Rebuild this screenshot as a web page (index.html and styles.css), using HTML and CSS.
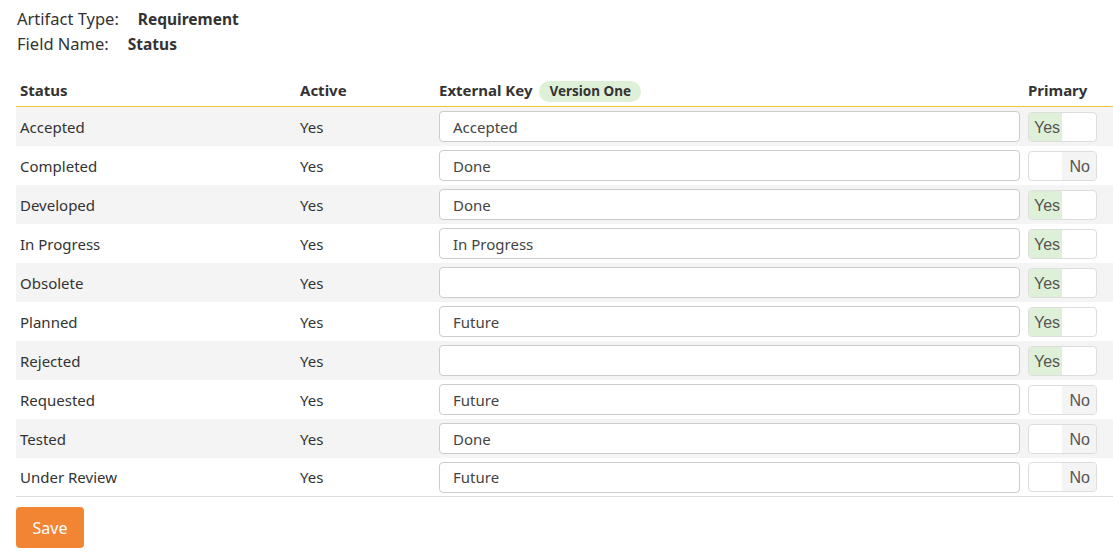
FILE: index.html
```html
<!DOCTYPE html>
<html>
<head>
<meta charset="utf-8">
<link rel="stylesheet" href="styles.css">
</head>
<body>
<div class="page">
  <div class="info">
    <div class="info-row"><span class="info-label">Artifact Type:</span><span class="info-value">Requirement</span></div>
    <div class="info-row"><span class="info-label">Field Name:</span><span class="info-value">Status</span></div>
  </div>
  <table class="grid">
    <colgroup>
      <col class="c-status"><col class="c-active"><col class="c-key"><col class="c-primary">
    </colgroup>
    <thead>
      <tr class="head-row">
        <th>Status</th>
        <th>Active</th>
        <th>External Key <span class="badge">Version One</span></th>
        <th>Primary</th>
      </tr>
    </thead>
    <tbody>
      <tr><td>Accepted</td><td>Yes</td><td><input class="key" type="text" value="Accepted"></td><td><div class="toggle on"><span class="t-yes">Yes</span><span class="t-no"></span></div></td></tr>
      <tr><td>Completed</td><td>Yes</td><td><input class="key" type="text" value="Done"></td><td><div class="toggle off"><span class="t-yes"></span><span class="t-no">No</span></div></td></tr>
      <tr><td>Developed</td><td>Yes</td><td><input class="key" type="text" value="Done"></td><td><div class="toggle on"><span class="t-yes">Yes</span><span class="t-no"></span></div></td></tr>
      <tr><td>In Progress</td><td>Yes</td><td><input class="key" type="text" value="In Progress"></td><td><div class="toggle on"><span class="t-yes">Yes</span><span class="t-no"></span></div></td></tr>
      <tr><td>Obsolete</td><td>Yes</td><td><input class="key" type="text" value=""></td><td><div class="toggle on"><span class="t-yes">Yes</span><span class="t-no"></span></div></td></tr>
      <tr><td>Planned</td><td>Yes</td><td><input class="key" type="text" value="Future"></td><td><div class="toggle on"><span class="t-yes">Yes</span><span class="t-no"></span></div></td></tr>
      <tr><td>Rejected</td><td>Yes</td><td><input class="key" type="text" value=""></td><td><div class="toggle on"><span class="t-yes">Yes</span><span class="t-no"></span></div></td></tr>
      <tr><td>Requested</td><td>Yes</td><td><input class="key" type="text" value="Future"></td><td><div class="toggle off"><span class="t-yes"></span><span class="t-no">No</span></div></td></tr>
      <tr><td>Tested</td><td>Yes</td><td><input class="key" type="text" value="Done"></td><td><div class="toggle off"><span class="t-yes"></span><span class="t-no">No</span></div></td></tr>
      <tr><td>Under Review</td><td>Yes</td><td><input class="key" type="text" value="Future"></td><td><div class="toggle off"><span class="t-yes"></span><span class="t-no">No</span></div></td></tr>
    </tbody>
  </table>
  <button class="save">Save</button>
</div>
</body>
</html>
```
FILE: styles.css
```css
html, body {
  margin: 0;
  padding: 0;
  background: #fff;
}
body {
  font-family: "Noto Sans", "Open Sans", sans-serif;
  font-size: 15px;
  color: #333;
}
.page {
  padding: 6px 0 0 16px;
}
.info {
  display: flex;
  flex-direction: column;
  padding-left: 1px;
}
.info-row {
  height: 25px;
  line-height: 25px;
  display: flex;
  align-items: baseline;
  gap: 19px;
}
.info-label {
  font-size: 16.5px;
  color: #333;
}
.info-value {
  font-weight: bold;
  font-size: 15.5px;
}
.grid {
  margin-top: 19px;
  border-collapse: separate;
  border-spacing: 0;
  table-layout: fixed;
  width: 1097px;
}
.c-status { width: 280px; }
.c-active { width: 139px; }
.c-key { width: 589px; }
.c-primary { width: 89px; }
.grid th {
  box-sizing: border-box;
  text-align: left;
  font-weight: bold;
  padding: 0 4px;
  height: 32px;
  line-height: 31px;
  border-bottom: 1px solid #f2c43c;
  vertical-align: top;
}
.grid td {
  box-sizing: border-box;
  padding: 0 4px;
  height: 39px;
  vertical-align: middle;
}
.grid tbody tr:nth-child(odd) td {
  background: #f4f4f4;
}
.grid tbody tr:last-child td {
  border-bottom: 1px solid #ddd;
}
.badge {
  display: inline-block;
  vertical-align: baseline;
  margin-left: 3px;
  padding: 0 10px;
  height: 21px;
  line-height: 21px;
  border-radius: 11px;
  background: #dff0d8;
  font-size: 13.5px;
  font-weight: bold;
  color: #333;
}
.key {
  box-sizing: border-box;
  width: 100%;
  height: 31px;
  border: 1px solid #ccc;
  border-radius: 4px;
  padding: 0 13px;
  font-family: "Noto Sans", "Open Sans", sans-serif;
  font-size: 15px;
  color: #444;
  background: #fff;
  display: block;
}
.toggle {
  box-sizing: border-box;
  width: 69px;
  height: 30px;
  border: 1px solid #ddd;
  border-radius: 4px;
  display: flex;
  overflow: hidden;
  background: #fff;
  font-family: "Liberation Sans", Arial, sans-serif;
  font-size: 16px;
  line-height: 30px;
  color: #555;
}
.toggle span {
  flex: 1;
  height: 28px;
}
.t-yes {
  text-align: left;
  padding-left: 5px;
}
.t-no {
  text-align: right;
  padding-right: 6px;
}
.toggle.on .t-yes { background: #dff0d8; }
.toggle.off .t-no { background: #f4f4f4; }
.save {
  margin-top: 10px;
  width: 68px;
  height: 41px;
  border: none;
  border-radius: 4px;
  background: #f28534;
  color: #fff;
  font-family: "Noto Sans", "Open Sans", sans-serif;
  font-size: 16px;
  cursor: pointer;
}
```
